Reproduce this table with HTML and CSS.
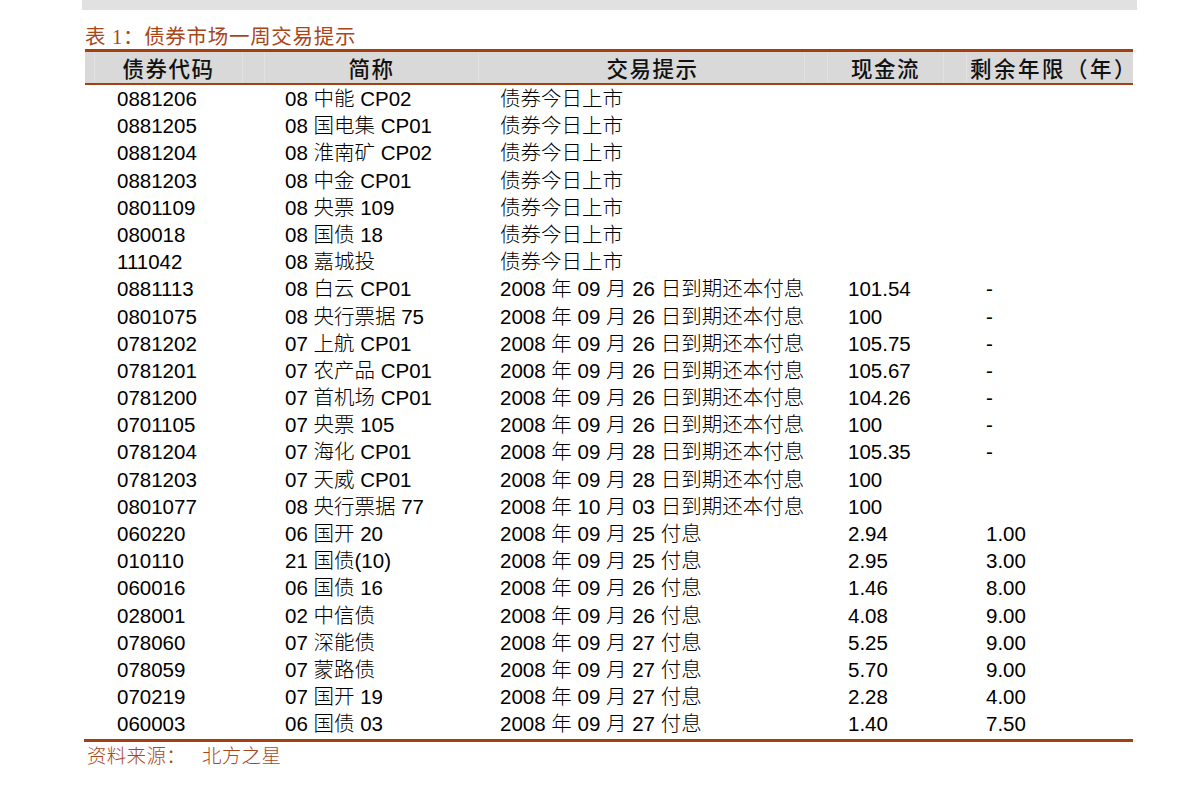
FILE: index.html
```html
<!DOCTYPE html>
<html lang="zh">
<head>
<meta charset="utf-8">
<title>债券市场一周交易提示</title>
<link rel="stylesheet" href="styles.css">
</head>
<body>
<div class="topbar"></div>
<div class="page">
  <div class="title">表 1：债券市场一周交易提示</div>
  <div class="table">
    <div class="thead">
      <div class="hc sp1"></div>
      <div class="hc code">债券代码</div>
      <div class="hc sp2"></div>
      <div class="hc name">简称</div>
      <div class="hc hint">交易提示</div>
      <div class="hc sp3"></div>
      <div class="hc cash">现金流</div>
      <div class="hc sp4"></div>
      <div class="hc rem">剩余年限（年）</div>
    </div>
    <div class="tbody">
      <div class="row"><span>0881206</span><span>08 中能 CP02</span><span>债券今日上市</span><span></span><span></span></div>
      <div class="row"><span>0881205</span><span>08 国电集 CP01</span><span>债券今日上市</span><span></span><span></span></div>
      <div class="row"><span>0881204</span><span>08 淮南矿 CP02</span><span>债券今日上市</span><span></span><span></span></div>
      <div class="row"><span>0881203</span><span>08 中金 CP01</span><span>债券今日上市</span><span></span><span></span></div>
      <div class="row"><span>0801109</span><span>08 央票 109</span><span>债券今日上市</span><span></span><span></span></div>
      <div class="row"><span>080018</span><span>08 国债 18</span><span>债券今日上市</span><span></span><span></span></div>
      <div class="row"><span>111042</span><span>08 嘉城投</span><span>债券今日上市</span><span></span><span></span></div>
      <div class="row"><span>0881113</span><span>08 白云 CP01</span><span>2008 年 09 月 26 日到期还本付息</span><span>101.54</span><span>-</span></div>
      <div class="row"><span>0801075</span><span>08 央行票据 75</span><span>2008 年 09 月 26 日到期还本付息</span><span>100</span><span>-</span></div>
      <div class="row"><span>0781202</span><span>07 上航 CP01</span><span>2008 年 09 月 26 日到期还本付息</span><span>105.75</span><span>-</span></div>
      <div class="row"><span>0781201</span><span>07 农产品 CP01</span><span>2008 年 09 月 26 日到期还本付息</span><span>105.67</span><span>-</span></div>
      <div class="row"><span>0781200</span><span>07 首机场 CP01</span><span>2008 年 09 月 26 日到期还本付息</span><span>104.26</span><span>-</span></div>
      <div class="row"><span>0701105</span><span>07 央票 105</span><span>2008 年 09 月 26 日到期还本付息</span><span>100</span><span>-</span></div>
      <div class="row"><span>0781204</span><span>07 海化 CP01</span><span>2008 年 09 月 28 日到期还本付息</span><span>105.35</span><span>-</span></div>
      <div class="row"><span>0781203</span><span>07 天威 CP01</span><span>2008 年 09 月 28 日到期还本付息</span><span>100</span><span></span></div>
      <div class="row"><span>0801077</span><span>08 央行票据 77</span><span>2008 年 10 月 03 日到期还本付息</span><span>100</span><span></span></div>
      <div class="row"><span>060220</span><span>06 国开 20</span><span>2008 年 09 月 25 付息</span><span>2.94</span><span>1.00</span></div>
      <div class="row"><span>010110</span><span>21 国债(10)</span><span>2008 年 09 月 25 付息</span><span>2.95</span><span>3.00</span></div>
      <div class="row"><span>060016</span><span>06 国债 16</span><span>2008 年 09 月 26 付息</span><span>1.46</span><span>8.00</span></div>
      <div class="row"><span>028001</span><span>02 中信债</span><span>2008 年 09 月 26 付息</span><span>4.08</span><span>9.00</span></div>
      <div class="row"><span>078060</span><span>07 深能债</span><span>2008 年 09 月 27 付息</span><span>5.25</span><span>9.00</span></div>
      <div class="row"><span>078059</span><span>07 蒙路债</span><span>2008 年 09 月 27 付息</span><span>5.70</span><span>9.00</span></div>
      <div class="row"><span>070219</span><span>07 国开 19</span><span>2008 年 09 月 27 付息</span><span>2.28</span><span>4.00</span></div>
      <div class="row"><span>060003</span><span>06 国债 03</span><span>2008 年 09 月 27 付息</span><span>1.40</span><span>7.50</span></div>
    </div>
  </div>
  <div class="source">资料来源：<span class="src-name">北方之星</span></div>
</div>
</body>
</html>
```

FILE: styles.css
```css
html, body {
  margin: 0;
  padding: 0;
  background: #ffffff;
}

body {
  font-family: "Liberation Sans", "Noto Sans CJK SC", sans-serif;
  color: #000;
}

.topbar {
  margin-left: 82px;
  width: 1055px;
  height: 10px;
  background: #e1e1e1;
}

.page {
  margin-left: 84px;
  width: 1049px;
}

.title {
  margin-top: 16px;
  padding-left: 1px;
  height: 23px;
  line-height: 23px;
  font-size: 20.5px;
  letter-spacing: 0.7px;
  color: #a8461a;
  font-family: "Liberation Serif", "Noto Sans CJK SC", serif;
  font-weight: 400;
}

.table {
  border-bottom: 3px solid #a53f10;
  padding-bottom: 1px;
}

.thead {
  display: grid;
  grid-template-columns: 10px 148px 22px 214px 326px 23px 116px 23px 167px;
  height: 31px;
  background: #d9d9d9;
  border-top: 3px solid #a53f10;
  border-bottom: 2px solid #a53f10;
  margin-left: 1px;
}

.hc {
  font-family: "Noto Sans CJK SC", sans-serif;
  font-size: 21.5px;
  font-weight: 500;
  letter-spacing: 1.5px;
  line-height: 31px;
  text-align: center;
  color: #111;
  white-space: nowrap;
  border-right: 1px solid #e2e2e2;
  box-sizing: border-box;
}

.hc.rem {
  border-right: none;
  letter-spacing: 2.5px;
  padding-left: 3px;
}

.hc.hint {
  padding-left: 22px;
  border-right: 1px solid #e2e2e2;
}

.tbody {
  display: flex;
  flex-direction: column;
}

.row {
  display: grid;
  grid-template-columns: 168px 215px 348px 138px 1fr;
  padding-left: 33px;
  height: 27.2px;
  line-height: 27.2px;
  font-size: 20.5px;
  font-weight: 300;
  white-space: nowrap;
}

.source {
  margin-top: 0;
  padding-left: 3px;
  font-family: "Noto Sans CJK SC", sans-serif;
  font-size: 19.5px;
  font-weight: 300;
  letter-spacing: 0.3px;
  line-height: 26px;
  color: #a8461a;
}

.src-name {
  margin-left: 16px;
}
```
